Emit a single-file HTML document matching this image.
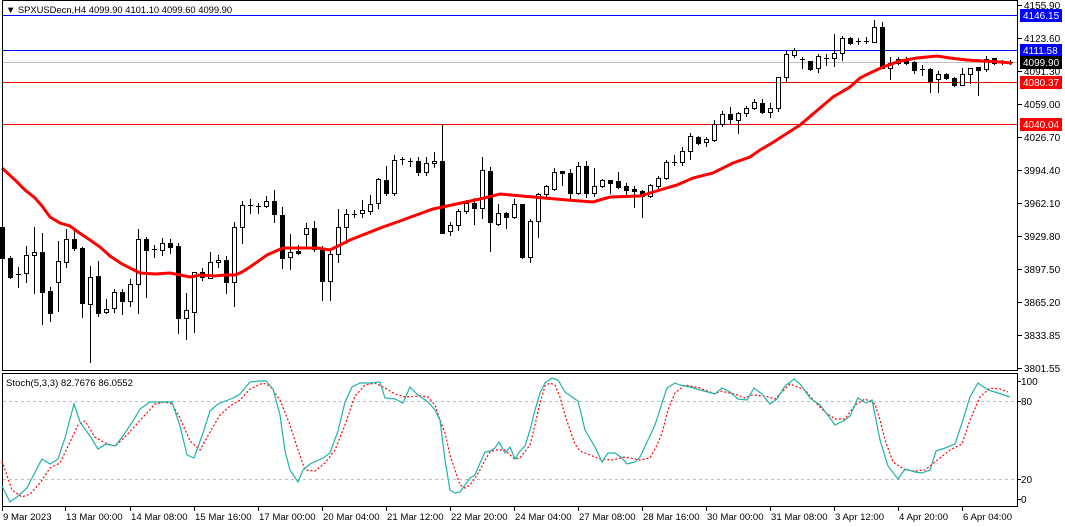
<!DOCTYPE html>
<html><head><meta charset="utf-8"><style>
html,body{margin:0;padding:0;background:#fff;width:1065px;height:527px;overflow:hidden}
svg{display:block;font-family:"Liberation Sans",sans-serif}
</style></head><body>
<svg id="s" width="1065" height="527" viewBox="0 0 1065 527" shape-rendering="crispEdges">
<rect width="1065" height="527" fill="#fff"/>
<line x1="2" y1="15.5" x2="1018" y2="15.5" stroke="#0000ff"/>
<line x1="2" y1="50.5" x2="1018" y2="50.5" stroke="#0000ff"/>
<line x1="2" y1="62.5" x2="1018" y2="62.5" stroke="#c0c0c0"/>
<line x1="2" y1="82.5" x2="1018" y2="82.5" stroke="#ff0000"/>
<line x1="2" y1="124.5" x2="1018" y2="124.5" stroke="#ff0000"/>
<g id="candles"></g>
<polyline fill="none" stroke="#ff0000" stroke-width="3" shape-rendering="auto" points="2,168 15,180 25,190 35,198 42,206 50,217 60,223 70,226 78,232 90,240 100,247 110,256 122,264 130,268 140,273 155,274 170,273 180,275 190,277 200,275 215,276 225,275 235,275 242,272 250,267 267,255 283,248 317,248 330,250 350,240 383,227 400,221 433,209 480,199 500,194 533,197 567,200 593,202 610,197 640,196 660,190 677,185 693,178 713,173 733,163 750,157 760,150 772,143 800,125 833,97 850,87 860,78 870,73 883,67 900,61 917,58 937,56 950,58 967,60 983,61 1000,62 1012,63"/>
<rect x="2.5" y="0.5" width="1015" height="370" fill="none" stroke="#000"/>
<rect x="2.5" y="373.5" width="1015" height="133" fill="none" stroke="#000"/>
<text x="6" y="13" font-size="9.4" fill="#000">▼ SPXUSDecn,H4  4099.90 4101.10 4099.60 4099.90</text>
<g font-size="10" fill="#000">
<text x="1024" y="9">4155.90</text>
<text x="1024" y="42">4123.60</text>
<text x="1024" y="75">4091.30</text>
<text x="1024" y="108">4059.00</text>
<text x="1024" y="141">4026.70</text>
<text x="1024" y="174">3994.40</text>
<text x="1024" y="207">3962.10</text>
<text x="1024" y="240">3929.80</text>
<text x="1024" y="273">3897.50</text>
<text x="1024" y="306">3865.20</text>
<text x="1024" y="339">3833.85</text>
<text x="1024" y="372">3801.55</text>
</g>
<g stroke="#000">
<line x1="1018" y1="5.5" x2="1022" y2="5.5"/><line x1="1018" y1="38.5" x2="1022" y2="38.5"/><line x1="1018" y1="71.5" x2="1022" y2="71.5"/><line x1="1018" y1="104.5" x2="1022" y2="104.5"/><line x1="1018" y1="137.5" x2="1022" y2="137.5"/><line x1="1018" y1="170.5" x2="1022" y2="170.5"/><line x1="1018" y1="203.5" x2="1022" y2="203.5"/><line x1="1018" y1="236.5" x2="1022" y2="236.5"/><line x1="1018" y1="269.5" x2="1022" y2="269.5"/><line x1="1018" y1="302.5" x2="1022" y2="302.5"/><line x1="1018" y1="335.5" x2="1022" y2="335.5"/><line x1="1018" y1="368.5" x2="1022" y2="368.5"/>
</g>
<rect x="1020" y="9" width="42" height="13" fill="#0000ff"/><text x="1023" y="19" font-size="10" fill="#fff">4146.15</text>
<rect x="1020" y="44" width="42" height="13" fill="#0000ff"/><text x="1023" y="54" font-size="10" fill="#fff">4111.58</text>
<rect x="1020" y="56" width="42" height="13" fill="#000"/><text x="1023" y="66" font-size="10" fill="#fff">4099.90</text>
<rect x="1020" y="76" width="42" height="13" fill="#ff0000"/><text x="1023" y="86" font-size="10" fill="#fff">4080.37</text>
<rect x="1020" y="118" width="42" height="13" fill="#ff0000"/><text x="1023" y="128" font-size="10" fill="#fff">4040.04</text>
<line x1="3" y1="401.5" x2="1017" y2="401.5" stroke="#c0c0c0" stroke-dasharray="3,3"/>
<line x1="3" y1="479.5" x2="1017" y2="479.5" stroke="#c0c0c0" stroke-dasharray="3,3"/>
<text x="6" y="386" font-size="9.6" fill="#000">Stoch(5,3,3) 82.7676 86.0552</text>
<polyline fill="none" stroke="#ff0000" stroke-width="1.2" stroke-dasharray="2,2" shape-rendering="auto" points="2,461 12,490 22,497 30,494 40,483 50,468 60,463 70,442 78,425 85,421 95,437 105,443 115,446 125,437 135,426 145,415 155,404 165,402 172,404 180,418 190,441 200,450 210,432 220,415 230,406 240,400 250,389 263,383 270,386 280,400 290,425 298,450 305,470 315,471 325,463 335,450 345,425 355,396 365,385 375,383 385,388 395,394 405,397 420,396 428,397 435,405 440,420 445,433 450,455 455,470 460,485 465,488 470,485 475,478 480,470 485,460 490,452 495,450 505,450 510,455 515,459 520,458 530,445 535,425 540,403 545,386 550,383 555,385 560,397 565,415 570,430 575,444 580,451 590,455 600,459 612,460 625,457 640,460 650,458 657,445 662,433 668,410 675,393 685,385 700,388 715,394 720,391 735,394 745,398 752,395 765,396 775,399 790,384 805,390 815,402 825,412 835,419 845,419 855,405 865,399 875,404 880,420 885,440 893,462 905,470 915,471 925,470 940,458 950,450 962,444 970,420 980,397 990,388 1000,389 1008,392"/>
<polyline fill="none" stroke="#20b2aa" stroke-width="1.2" shape-rendering="auto" points="2,486 10,502 17,497 27,488 33,476 42,459 50,464 58,459 65,438 74,404 80,422 90,436 98,449 106,444 115,446 123,436 133,421 140,409 150,402 163,402 172,402 180,426 187,455 194,458 203,433 210,411 218,404 228,400 233,398 240,394 250,382 260,381 266,381 273,389 280,415 285,451 290,470 298,482 303,470 310,464 323,458 330,453 338,431 345,402 352,387 360,383 370,383 380,382 385,398 395,399 403,403 410,387 418,395 428,402 435,410 440,420 445,460 450,490 455,493 460,492 465,485 470,478 475,475 480,463 485,452 490,451 495,448 499,442 505,453 510,447 515,459 520,451 525,446 530,430 535,410 540,393 545,383 552,378 558,380 565,392 572,397 578,401 585,430 595,447 602,462 608,453 615,453 622,458 627,464 635,462 640,457 648,440 655,425 662,403 667,388 675,383 680,385 690,387 700,390 708,392 715,394 722,388 730,392 738,399 747,400 754,388 762,394 770,404 777,399 785,386 794,379 800,384 810,398 820,405 830,418 835,425 845,420 850,416 858,398 866,403 872,400 880,440 888,466 898,479 905,469 915,472 922,473 930,470 936,451 945,448 955,444 962,423 970,397 978,383 988,390 998,393 1010,397"/>
<g font-size="10" fill="#000">
<text x="1021" y="385">100</text><text x="1021" y="405">80</text><text x="1021" y="483">20</text><text x="1021" y="503">0</text>
</g>
<g stroke="#000">
<line x1="1018" y1="381.5" x2="1021" y2="381.5"/><line x1="1018" y1="401.5" x2="1021" y2="401.5"/><line x1="1018" y1="479.5" x2="1021" y2="479.5"/><line x1="1018" y1="499.5" x2="1021" y2="499.5"/>
</g>
<g stroke="#000" id="tt"></g>
<g font-size="9.6" fill="#000" id="tl"></g>
</svg>
<script>
var d=[[227,258,227,263],[258,277,256,278],[274,274,267,287],[273,255,246,282],[255,252,227,293],[252,292,233,324],[291,313,287,321],[282,261,241,311],[262,239,229,267],[239,248,229,250],[248,303,247,317],[304,277,266,362],[276,313,261,316],[312,309,299,313],[308,292,289,312],[292,301,289,314],[301,284,279,306],[284,239,229,313],[239,250,237,297],[249,249,245,257],[250,243,238,255],[243,247,239,253],[246,318,243,333],[318,310,293,339],[312,272,272,332],[272,277,268,280],[278,262,252,278],[262,260,255,267],[260,282,256,293],[282,227,222,306],[227,205,201,243],[205,205,199,213],[206,206,203,213],[206,201,196,207],[201,214,190,222],[215,258,207,268],[257,252,234,269],[251,253,245,254],[234,228,223,248],[228,249,221,251],[248,281,246,300],[281,254,248,300],[254,227,209,262],[227,214,209,243],[214,214,210,217],[213,210,200,217],[211,204,195,214],[203,179,178,208],[180,193,166,195],[193,160,155,195],[159,159,157,164],[161,161,158,166],[161,172,157,175],[172,163,157,175],[163,161,152,167],[161,233,124,233],[231,225,222,235],[225,211,209,230],[211,203,200,213],[203,208,198,224],[208,170,157,218],[171,222,167,251],[224,213,204,225],[213,217,212,228],[217,204,199,218],[204,257,204,258],[257,221,219,262],[221,194,193,237],[194,186,185,197],[189,172,168,190],[171,173,171,185],[173,193,169,199],[193,166,162,194],[166,193,161,197],[193,186,168,196],[186,180,179,187],[180,183,180,193],[181,187,172,188],[186,190,183,196],[189,191,186,207],[191,196,190,217],[196,185,184,197],[186,178,176,188],[178,162,160,179],[162,162,155,165],[162,151,147,165],[151,136,133,159],[137,143,136,144],[142,139,137,146],[140,124,120,141],[124,114,111,126],[114,119,107,123],[120,113,112,133],[113,108,106,116],[108,102,99,109],[103,112,99,113],[112,108,103,117],[108,77,77,111],[77,54,51,82],[55,50,48,57],[59,59,57,68],[61,69,61,70],[68,56,54,72],[58,58,54,65],[58,53,34,66],[53,38,36,60],[38,43,37,44],[41,41,38,44],[41,41,37,43],[42,27,20,42],[27,68,22,68],[68,63,57,79],[63,59,57,64],[59,63,57,64],[62,70,61,73],[69,69,65,75],[69,81,68,92],[79,74,71,92],[74,78,73,79],[78,85,77,86],[85,74,68,85],[74,68,68,83],[67,70,67,95],[69,59,56,71],[58,63,58,64],[62,62,60,64],[62,62,60,64]];
var g=document.getElementById('candles'),h='';
d.forEach(function(b,i){var x=8*i,o=b[0],c=b[1],hi=b[2],lo=b[3];
h+='<rect x="'+(x+2)+'" y="'+hi+'" width="1" height="'+(lo-hi+1)+'" fill="#000"/>';
var t=Math.min(o,c),bt=Math.max(o,c);
if(bt-t<1){h+='<rect x="'+x+'" y="'+t+'" width="5" height="1" fill="#000"/>';}
else if(c<o){h+='<rect x="'+(x+0.5)+'" y="'+(t+0.5)+'" width="4" height="'+(bt-t)+'" fill="#fff" stroke="#000"/>';}
else{h+='<rect x="'+x+'" y="'+t+'" width="5" height="'+(bt-t+1)+'" fill="#000"/>';}
});
g.innerHTML=h;
var L=[[2,"9 Mar 2023"],[65,"13 Mar 00:00"],[130,"14 Mar 08:00"],[194,"15 Mar 16:00"],[258,"17 Mar 00:00"],[322,"20 Mar 04:00"],[386,"21 Mar 12:00"],[450,"22 Mar 20:00"],[514,"24 Mar 04:00"],[578,"27 Mar 08:00"],[642,"28 Mar 16:00"],[706,"30 Mar 00:00"],[770,"31 Mar 08:00"],[834,"3 Apr 12:00"],[898,"4 Apr 20:00"],[962,"6 Apr 04:00"]];
var tt='',tl='';L.forEach(function(a){tt+='<line x1="'+(a[0]+0.5)+'" y1="507" x2="'+(a[0]+0.5)+'" y2="511"/>';tl+='<text x="'+(a[0]+1)+'" y="520">'+a[1]+'</text>';});
document.getElementById('tt').innerHTML=tt;document.getElementById('tl').innerHTML=tl;
</script>
</body></html>
